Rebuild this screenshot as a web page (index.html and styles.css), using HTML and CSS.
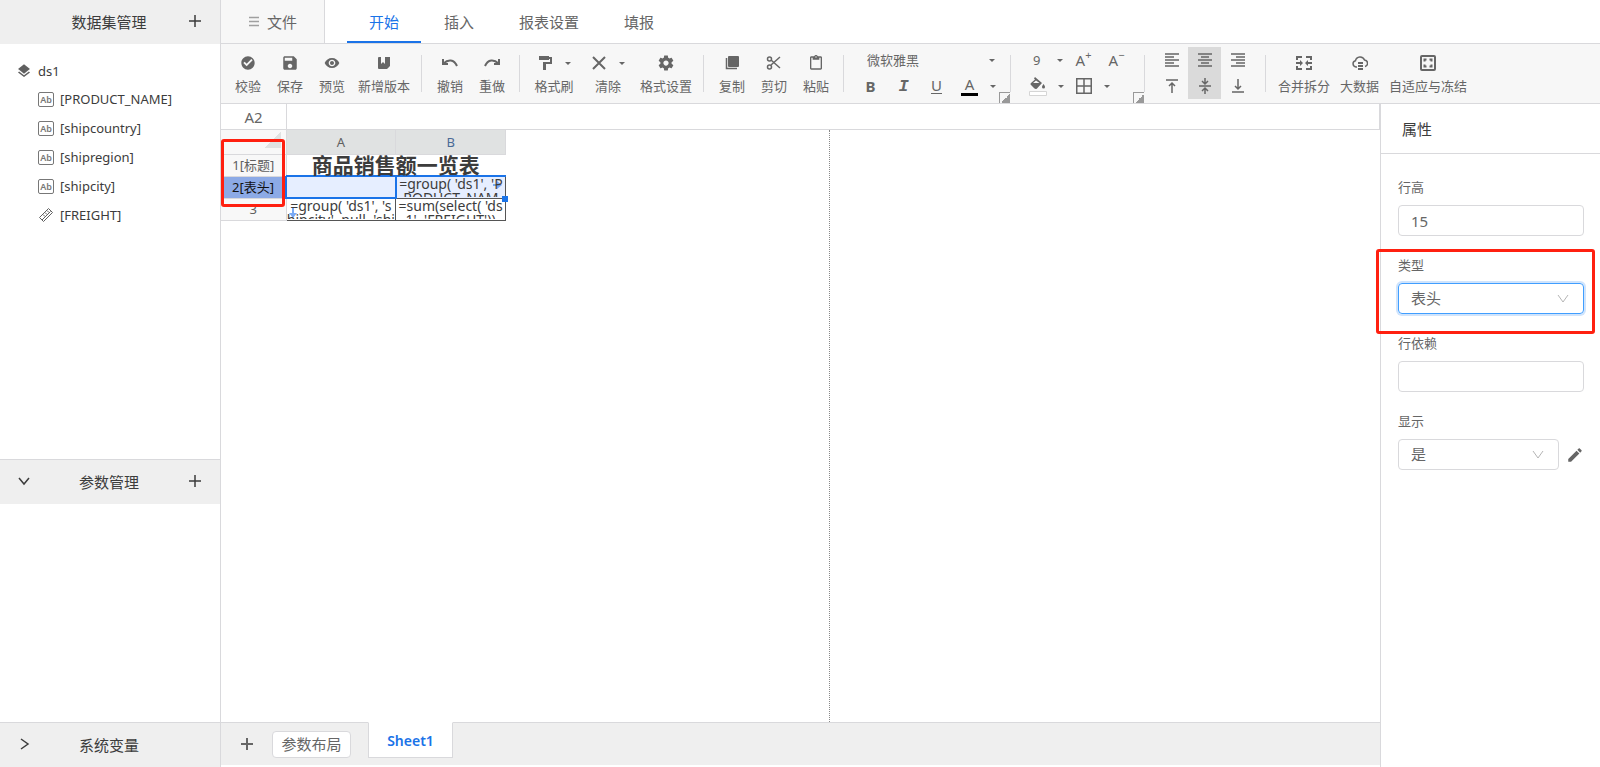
FILE: index.html
```html
<!DOCTYPE html>
<html lang="zh-CN">
<head>
  <meta charset="UTF-8" />
  <meta name="viewport" content="width=device-width, initial-scale=1" />
  <title>报表设计器</title>
  <link rel="stylesheet" href="styles.css">
</head>
<body>
  <aside class="sidebar">
    <div class="side-head">
      <span></span>
      <h2>数据集管理</h2>
      <button class="icon-btn" title="新增数据集"><svg width="12" height="12" viewBox="0 0 12 12"><path class="line2" d="M6 0v12M0 6h12"/></svg></button>
    </div>
    <div class="tree">
      <div class="tree-root"><svg class="fill" width="16" height="16" viewBox="0 0 24 24"><path d="M11.99 18.54l-7.37-5.73L3 14.07l9 7 9-7-1.63-1.27-7.38 5.74zM12 16l7.36-5.73L21 9l-9-7-9 7 1.63 1.27L12 16z"/></svg>ds1</div>
      <ul>
        <li><span class="ab">Ab</span>[PRODUCT_NAME]</li>
        <li><span class="ab">Ab</span>[shipcountry]</li>
        <li><span class="ab">Ab</span>[shipregion]</li>
        <li><span class="ab">Ab</span>[shipcity]</li>
        <li><svg width="16" height="16" viewBox="0 0 16 16"><path class="thin" d="M10.500 1.500L14.500 5.500 5.500 14.500 1.500 10.500zM4 13l8.500-8.500M5 7.500l2 2M7 5.500l2 2M9 3.500l2 2"/></svg>[FREIGHT]</li>
      </ul>
    </div>
    <div class="side-head ruled">
      <button class="icon-btn" title="收起"><svg width="12" height="12" viewBox="0 0 12 12"><path class="line" d="M1 3l5 6 5-6"/></svg></button>
      <h2>参数管理</h2>
      <button class="icon-btn" title="新增参数"><svg width="12" height="12" viewBox="0 0 12 12"><path class="line2" d="M6 0v12M0 6h12"/></svg></button>
    </div>
    <div class="params"></div>
    <div class="side-head ruled">
      <button class="icon-btn" title="展开"><svg width="12" height="12" viewBox="0 0 12 12"><path class="line" d="M3 1l7 5-7 5"/></svg></button>
      <h2>系统变量</h2>
      <span></span>
    </div>
  </aside>

  <main class="designer">
    <nav class="menu">
      <button class="file"><svg width="10" height="11" viewBox="0 0 10 11"><path class="line" d="M0 1.500h10M0 5.500h10M0 9.500h10"/></svg>文件</button>
      <div class="tabs">
        <button class="tab active">开始</button>
        <button class="tab">插入</button>
        <button class="tab">报表设置</button>
        <button class="tab">填报</button>
      </div>
    </nav>

    <div class="toolbar">
      <div class="group">
        <button class="tool"><svg class="fill" width="16" height="16" viewBox="0 0 24 24"><path d="M12 2C6.480 2 2 6.480 2 12s4.480 10 10 10 10-4.480 10-10S17.520 2 12 2zm-2 15l-5-5 2-2 3 3 7-7 2 2-9 9z"/></svg>校验</button>
        <button class="tool"><svg class="fill" width="18" height="18" viewBox="0 0 24 24"><path d="M17 3H5c-1.110 0-2 .9-2 2v14c0 1.100.89 2 2 2h14c1.100 0 2-.9 2-2V7l-4-4zm-5 16c-1.660 0-3-1.340-3-3s1.340-3 3-3 3 1.340 3 3-1.340 3-3 3zm3-10H5V5h10v4z"/></svg>保存</button>
        <button class="tool"><svg class="fill" width="16" height="16" viewBox="0 0 24 24"><path d="M12 4.500C7 4.500 2.730 7.610 1 12c1.730 4.390 6 7.500 11 7.500s9.270-3.110 11-7.500c-1.730-4.390-6-7.500-11-7.500zM12 17c-2.760 0-5-2.240-5-5s2.240-5 5-5 5 2.240 5 5-2.240 5-5 5zm0-8c-1.660 0-3 1.340-3 3s1.340 3 3 3 3-1.340 3-3-1.340-3-3-3z"/></svg>预览</button>
        <button class="tool"><svg class="fill" width="16" height="16" viewBox="0 0 16 16"><path d="M3 2h2v7l2-2 2 2V2h5v9l-3 3H3a1 1 0 0 1-1-1V3a1 1 0 0 1 1-1z"/></svg>新增版本</button>
      </div>
      <span class="sep"></span>
      <div class="group">
        <button class="tool"><svg width="16" height="16" viewBox="0 0 16 16"><path class="line2" d="M1 4v5h5M1.500 8.500C6 4 12 4 15 11"/></svg>撤销</button>
        <button class="tool"><svg width="16" height="16" viewBox="0 0 16 16"><path class="line2" d="M15 4v5h-5M14.500 8.500C10 4 4 4 1 11"/></svg>重做</button>
      </div>
      <span class="sep"></span>
      <div class="group">
        <button class="tool drop"><span class="pair"><svg class="fill" width="16" height="16" viewBox="0 0 16 16"><path d="M2 1h10v1h3v7H9v6H6V7h7V4h-1v1H2z"/></svg><i class="caret"></i></span>格式刷</button>
        <button class="tool drop"><span class="pair"><svg width="16" height="16" viewBox="0 0 16 16"><path class="line2" d="M2 2l12 12M14 2L2 14"/></svg><i class="caret"></i></span>清除</button>
        <button class="tool"><svg class="fill" width="18" height="18" viewBox="0 0 24 24"><path d="M19.430 12.980c.04-.32.07-.64.07-.98s-.03-.66-.07-.98l2.110-1.650c.19-.15.24-.42.12-.64l-2-3.460c-.12-.22-.39-.3-.61-.22l-2.490 1c-.52-.4-1.080-.73-1.690-.98l-.38-2.650C14.460 2.180 14.250 2 14 2h-4c-.25 0-.46.18-.49.42l-.38 2.650c-.61.25-1.170.59-1.690.98l-2.490-1c-.23-.09-.49 0-.61.22l-2 3.460c-.13.22-.07.49.12.64l2.110 1.650c-.04.32-.07.65-.07.98s.03.66.07.98l-2.110 1.650c-.19.15-.24.42-.12.64l2 3.460c.12.22.39.3.61.22l2.490-1c.52.4 1.080.73 1.690.98l.38 2.650c.03.24.24.42.49.42h4c.25 0 .46-.18.49-.42l.38-2.650c.61-.25 1.170-.59 1.690-.98l2.490 1c.23.09.49 0 .61-.22l2-3.460c.12-.22.07-.49-.12-.64l-2.110-1.650zM12 15.500c-1.930 0-3.500-1.570-3.500-3.500s1.570-3.500 3.500-3.500 3.500 1.570 3.500 3.500-1.570 3.500-3.500 3.500z"/></svg>格式设置</button>
      </div>
      <span class="sep"></span>
      <div class="group">
        <button class="tool"><svg width="16" height="16" viewBox="0 0 16 16"><rect x="4" y="1" width="11" height="11" rx="1" fill="currentColor"/><path class="line" d="M2.500 3v10.500H13"/></svg>复制</button>
        <button class="tool"><svg width="16" height="16" viewBox="0 0 16 16"><path class="line" d="M14 2L5 10M5 5l9 8"/><circle class="line" cx="3.500" cy="4" r="2"/><circle class="line" cx="3.500" cy="12" r="2"/></svg>剪切</button>
        <button class="tool"><svg class="fill" width="16" height="16" viewBox="0 0 24 24"><path d="M19 2h-4.180C14.400.84 13.300 0 12 0c-1.300 0-2.400.84-2.820 2H5c-1.100 0-2 .9-2 2v16c0 1.100.9 2 2 2h14c1.100 0 2-.9 2-2V4c0-1.100-.9-2-2-2zm-7 0c.55 0 1 .45 1 1s-.45 1-1 1-1-.45-1-1 .45-1 1-1zm7 18H5V4h2v3h10V4h2v16z"/></svg>粘贴</button>
      </div>
      <span class="sep"></span>
      <div class="group format">
        <div class="format-row">
          <select class="font-select" aria-label="字体"><option>微软雅黑</option></select>
          <i class="caret"></i>
        </div>
        <div class="format-row">
          <button class="cell bold">B</button>
          <button class="cell italic">I</button>
          <button class="cell"><span class="under">U</span></button>
          <button class="cell"><span class="swatch">A</span></button>
          <button class="arrow" aria-label="字体颜色"><i class="caret"></i></button>
        </div>
        <button class="launcher" aria-label="字体设置"></button>
      </div>
      <span class="sep"></span>
      <div class="group format">
        <div class="format-row">
          <select class="size-select" aria-label="字号"><option>9</option></select>
          <i class="caret"></i>
          <button class="cell">A<sup>+</sup></button>
          <button class="cell">A<sup>−</sup></button>
        </div>
        <div class="format-row">
          <button class="cell" aria-label="填充"><svg width="18" height="20" viewBox="0 0 18 20"><path fill="currentColor" fill-rule="evenodd" d="M6 1l7 6-5 5.500c-1 .8-2 .5-2.500 0L2 9c-.7-.8-.6-1.500 0-2l4-3.500-1-1zM7 4.500L4 7h6.500zM14.500 8c1 1.500 1.500 2.200 1.500 3a1.500 1.500 0 0 1-3 0c0-.8.5-1.500 1.500-3z"/><path fill="#fff" stroke="#d5d5d5" d="M.5 15.500h17v4H.5z"/></svg></button>
          <button class="arrow" aria-label="填充颜色"><i class="caret"></i></button>
          <button class="cell" aria-label="边框"><svg width="16" height="16" viewBox="0 0 16 16"><path class="line" d="M.75.75h14.500v14.500H.75zM8 1v14M1 8h14"/></svg></button>
          <button class="arrow" aria-label="边框样式"><i class="caret"></i></button>
        </div>
        <button class="launcher" aria-label="单元格设置"></button>
      </div>
      <span class="sep"></span>
      <div class="group format">
        <div class="format-row">
          <button class="cell" aria-label="左对齐"><svg width="14" height="14" viewBox="0 0 14 14"><path class="bar" d="M0 1h14M0 4h9M0 7h14M0 10h9M0 13h14"/></svg></button>
          <button class="cell on" aria-label="居中"><svg width="14" height="14" viewBox="0 0 14 14"><path class="bar" d="M0 1h14M3 4h8M0 7h14M3 10h8M0 13h14"/></svg></button>
          <button class="cell" aria-label="右对齐"><svg width="14" height="14" viewBox="0 0 14 14"><path class="bar" d="M0 1h14M5 4h9M0 7h14M5 10h9M0 13h14"/></svg></button>
        </div>
        <div class="format-row">
          <button class="cell" aria-label="顶端对齐"><svg width="12" height="14" viewBox="0 0 12 14"><path class="line" d="M0 1h12M6 14V5M3 7l3-3 3 3"/></svg></button>
          <button class="cell on" aria-label="垂直居中"><svg width="12" height="16" viewBox="0 0 12 16"><path class="line" d="M0 8h12M6 0v5M3 3l3 3 3-3M6 16v-5M3 13l3-3 3 3"/></svg></button>
          <button class="cell" aria-label="底端对齐"><svg width="12" height="14" viewBox="0 0 12 14"><path class="line" d="M0 13h12M6 0v9M3 7l3 3 3-3"/></svg></button>
        </div>
      </div>
      <span class="sep"></span>
      <div class="group">
        <button class="tool"><svg width="16" height="16" viewBox="0 0 16 16"><path class="line2" d="M6 2H1v3M10 2h5v3M6 14H1v-3M10 14h5v-3M0 8h6M16 8h-6"/><path fill="currentColor" d="M4 5l3 3-3 3zM12 5L9 8l3 3z"/></svg>合并拆分</button>
        <button class="tool"><svg width="16" height="16" viewBox="0 0 16 16"><path class="line" d="M5 12H4a3.200 3.200 0 0 1-.5-6.300 4.700 4.700 0 0 1 9-.7 3.300 3.300 0 0 1 .5 6.500"/><path class="line2" d="M6 8h5M6 11h5M6 14h5"/></svg>大数据</button>
        <button class="tool"><svg width="16" height="16" viewBox="0 0 16 16"><rect class="line2" x="1" y="1" width="14" height="14" rx="1"/><path class="line2" d="M4.500 6.500v-2h2M9.500 4.500h2v2M11.500 9.500v2h-2M6.500 11.500h-2v-2"/></svg>自适应与冻结</button>
      </div>
    </div>

    <div class="work">
      <section class="editor">
        <div class="formula">
          <span class="cell-name">A2</span>
          <input type="text" aria-label="公式">
        </div>
        <div class="canvas">
          <table class="sheet">
            <thead>
              <tr><th class="corner"></th><th>A</th><th class="current">B</th></tr>
            </thead>
            <tbody>
              <tr><th>1[标题]</th><td class="title" colspan="2">商品销售额一览表</td></tr>
              <tr class="selected"><th>2[表头]</th><td></td><td><svg class="mark right" width="9" height="8" viewBox="0 0 9 8"><path d="M0 3h4V0l5 4-5 4V5H0z"/></svg><div class="value">=group( 'ds1', 'PRODUCT_NAME')</div><i class="handle"></i></td></tr>
              <tr class="detail"><th>3</th><td><svg class="mark down" width="8" height="10" viewBox="0 0 8 10"><path d="M3 0v5H0l4 5 4-5H5V0z"/></svg><div class="value">=group( 'ds1', 'shipcity', null, 'shi</div></td><td><div class="value">=sum(select( 'ds1', 'FREIGHT'))</div></td></tr>
            </tbody>
          </table>
          <div class="page-edge"></div>
          <div class="callout rows"></div>
        </div>
        <footer class="sheets">
          <button class="icon-btn" title="新增"><svg width="12" height="12" viewBox="0 0 12 12"><path class="line2" d="M6 0v12M0 6h12"/></svg></button>
          <button class="layout">参数布局</button>
          <button class="sheet-tab">Sheet1</button>
        </footer>
      </section>

      <aside class="props">
        <h2>属性</h2>
        <form>
          <div class="field">
            <label for="rowHeight">行高</label>
            <input id="rowHeight" type="text" value="15">
          </div>
          <div class="field">
            <label for="rowType">类型</label>
            <div class="select focus">
              <select id="rowType"><option>表头</option></select>
              <svg width="12" height="10" viewBox="0 0 12 10"><path class="line" d="M1 1l5 7 5-7"/></svg>
            </div>
            <div class="callout type"></div>
          </div>
          <div class="field">
            <label for="rowDep">行依赖</label>
            <input id="rowDep" type="text">
          </div>
          <div class="field">
            <label for="visible">显示</label>
            <div class="with-edit">
              <div class="select">
                <select id="visible"><option>是</option></select>
                <svg width="12" height="10" viewBox="0 0 12 10"><path class="line" d="M1 1l5 7 5-7"/></svg>
              </div>
              <button type="button" class="icon-btn edit" title="编辑"><svg class="fill" width="18" height="18" viewBox="0 0 24 24"><path d="M3 17.250V21h3.750L17.810 9.940l-3.750-3.750L3 17.250zM20.710 7.040c.39-.39.39-1.020 0-1.410l-2.340-2.340c-.39-.39-1.020-.39-1.410 0l-1.830 1.830 3.750 3.750 1.830-1.830z"/></svg></button>
            </div>
          </div>
        </form>
      </aside>
    </div>
  </main>
</body>
</html>
```

FILE: styles.css
```css
:root {
  --line: #d9d9dc;
  --bar: #efefef;
  --tool-bg: #f7f7f7;
  --text: #3c3c3c;
  --muted: #666666;
  --accent: #1a73e8;
  --mark: #ff2010;
}
* {
  box-sizing: border-box;
}
body {
  margin: 0;
  height: 100vh;
  display: flex;
  font-family: "Noto Sans", "Noto Sans CJK SC", sans-serif;
  font-size: 13px;
  color: var(--text);
  background: #fff;
  overflow: hidden;
}
button, input, select {
  font: inherit;
  color: inherit;
  background: none;
  border: none;
  margin: 0;
  padding: 0;
}
button {
  cursor: pointer;
}
select {
  appearance: none;
}
h2 {
  margin: 0;
  font-size: 15px;
  font-weight: 400;
}
svg {
  display: block;
  flex: none;
}
.fill {
  fill: currentColor;
}
.line, .line2, .bar, .thin {
  fill: none;
  stroke: currentColor;
  stroke-width: 1.5;
}
.line2 {
  stroke-width: 2;
}
.thin {
  stroke-width: 1;
}
.icon-btn {
  display: flex;
  align-items: center;
  justify-content: center;
}

/* left side */
.sidebar {
  flex: none;
  width: 221px;
  display: flex;
  flex-direction: column;
  border-right: 1px solid var(--line);
}
.side-head {
  flex: none;
  height: 44px;
  display: grid;
  grid-template-columns: 48px 1fr 50px;
  align-items: center;
  text-align: center;
  background: var(--bar);
  padding-bottom: 2px;
}
.side-head.ruled {
  height: 45px;
  border-top: 1px solid var(--line);
}
.side-head .line2 {
  stroke-width: 1.5;
}
.tree {
  flex: 403;
  padding-top: 12px;
}
.tree-root, .tree li {
  display: flex;
  align-items: center;
  height: 29px;
}
.tree-root {
  gap: 6px;
  padding-left: 16px;
}
.tree ul {
  list-style: none;
  margin: 0;
  padding: 0 0 0 38px;
}
.tree li {
  gap: 6px;
  padding-bottom: 1px;
}
.tree svg {
  color: #606060;
}
.ab {
  width: 16px;
  height: 15px;
  border: 1px solid #777;
  border-radius: 2px;
  font-size: 9px;
  font-weight: 600;
  line-height: 13px;
  text-align: center;
  color: #777;
}
.params {
  flex: 218;
}

/* menu */
.designer {
  flex: 1;
  min-width: 0;
  display: flex;
  flex-direction: column;
}
.menu {
  flex: none;
  height: 44px;
  display: flex;
  border-bottom: 1px solid var(--line);
  font-size: 15px;
  color: var(--muted);
}
.file {
  width: 104px;
  display: flex;
  align-items: center;
  justify-content: center;
  gap: 8px;
  padding-left: 1px;
  background: var(--tool-bg);
  border-right: 1px solid var(--line);
}
.file svg {
  color: #a0a0a0;
}
.tabs {
  display: flex;
  padding-left: 22px;
}
.tab {
  padding: 2px 22px 0;
  margin-right: 1px;
  border-bottom: 2px solid transparent;
}
.tab.active {
  color: var(--accent);
  border-bottom-color: var(--accent);
}

/* toolbar */
.toolbar {
  flex: none;
  height: 60px;
  display: flex;
  align-items: center;
  background: var(--tool-bg);
  border-bottom: 1px solid var(--line);
  color: var(--muted);
  white-space: nowrap;
}
.group {
  height: 100%;
  display: flex;
  padding: 0 6px;
}
.group + .sep + .group {
  padding-left: 7px;
}
.sep {
  flex: none;
  width: 1px;
  height: 37px;
  background: var(--line);
}
.tool {
  min-width: 42px;
  padding: 10px 5px 0;
  display: flex;
  flex-direction: column;
  align-items: center;
  gap: 5px;
  line-height: 18px;
}
.tool > svg, .pair {
  height: 18px;
}
.tool.drop {
  min-width: 54px;
}
.pair {
  display: flex;
  align-items: center;
  gap: 12px;
}
.caret {
  flex: none;
  border: 3px solid transparent;
  border-top-color: currentColor;
  border-bottom: none;
}
.group.format, .group + .sep + .group.format {
  position: relative;
  flex-direction: column;
  padding: 3px 11px 0 10px;
}
.format-row {
  height: 26px;
  display: flex;
  align-items: center;
}
.cell {
  width: 33px;
  height: 26px;
  display: flex;
  align-items: center;
  justify-content: center;
  font-size: 15px;
}
.cell.on {
  background: #dadada;
}
.cell sup {
  font-size: 11px;
  line-height: 16px;
  align-self: flex-start;
}
.bold {
  font-weight: 700;
}
.italic {
  font-family: "Liberation Mono", monospace;
  font-style: italic;
  font-weight: 700;
  font-size: 17px;
}
.under {
  width: 11px;
  line-height: 15px;
  border-bottom: 1px solid currentColor;
}
.swatch {
  width: 17px;
  line-height: 17px;
  border-bottom: 3px solid #000;
}
.arrow {
  width: 13px;
  height: 26px;
  display: flex;
  align-items: center;
  justify-content: center;
}
.font-select {
  width: 135px;
  padding-left: 13px;
}
.size-select {
  width: 36px;
  padding-left: 12px;
}
.size-select + .caret {
  margin-right: 4px;
}
.launcher {
  position: absolute;
  right: 0;
  bottom: 0;
  width: 11px;
  height: 11px;
  border: solid #999;
  border-width: 1px 0 0 1px;
  background: linear-gradient(135deg, transparent 55%, #999 55%);
}

/* sheet */
.work {
  flex: 1;
  min-height: 0;
  display: flex;
}
.editor {
  flex: 1;
  min-width: 0;
  display: flex;
  flex-direction: column;
}
.formula {
  flex: none;
  height: 26px;
  display: flex;
  border-bottom: 1px solid var(--line);
  border-right: 1px solid var(--line);
}
.cell-name {
  width: 66px;
  border-right: 1px solid var(--line);
  font-size: 15px;
  line-height: 27px;
  text-align: center;
  color: var(--muted);
}
.formula input {
  flex: 1;
}
.canvas {
  flex: 1;
  position: relative;
}
.sheet {
  width: 285px;
  table-layout: fixed;
  border-collapse: collapse;
}
.sheet th, .sheet td {
  position: relative;
  height: 22px;
  padding: 0;
  border: 1px solid var(--line);
}
.sheet th {
  font-weight: 400;
  line-height: 20px;
  color: #606060;
  background: #f8f8f8;
}
.sheet tr > :first-child {
  width: 65px;
  border-left: none;
}
.sheet thead th {
  height: 24px;
  background: #e0e2e2;
  border-top: none;
}
.sheet thead .current {
  color: #4a6a96;
}
.sheet thead .corner {
  background: linear-gradient(135deg, transparent 50%, #e0e2e2 50%) 44px 2px / 16px 16px no-repeat #f8f8f8;
}
.sheet td.title {
  font-size: 21px;
  font-weight: 700;
  line-height: 20px;
  text-align: center;
  border-color: #fff;
}
.sheet .selected th {
  color: #111;
  background: #8caae6;
}
.sheet .selected td {
  background: #e6eeff;
  border: 2px solid var(--accent);
}
.sheet .selected td + td {
  border: 1px solid #555;
  border-top: 2px solid var(--accent);
}
.sheet .detail td {
  border-right-color: #555;
  border-bottom-color: #555;
}
.value {
  position: relative;
  height: 20px;
  font-size: 14px;
  line-height: 14px;
  text-align: center;
  word-break: break-all;
  overflow: hidden;
}
.mark {
  position: absolute;
  fill: #7aaaf5;
}
.mark.right {
  right: 3px;
  top: 4px;
}
.mark.down {
  left: 2px;
  bottom: 2px;
}
.handle {
  position: absolute;
  right: -3px;
  bottom: -4px;
  width: 6px;
  height: 6px;
  background: var(--accent);
  z-index: 1;
}
.page-edge {
  position: absolute;
  left: 608px;
  top: 0;
  bottom: 0;
  border-left: 1px dotted #888;
}
.callout {
  position: absolute;
  border: 3px solid var(--mark);
  border-radius: 3px;
  pointer-events: none;
}
.callout.rows {
  left: 0;
  top: 9px;
  width: 64px;
  height: 68px;
}
.sheets {
  flex: none;
  height: 43px;
  margin-bottom: 2px;
  display: flex;
  align-items: center;
  background: var(--bar);
  border-top: 1px solid var(--line);
  font-size: 15px;
  color: var(--muted);
}
.sheets .icon-btn {
  width: 51px;
}
.layout {
  width: 79px;
  height: 27px;
  line-height: 25px;
  border: 1px solid var(--line);
  border-radius: 4px;
  background: #fff;
}
.sheet-tab {
  align-self: flex-start;
  height: 36px;
  width: 85px;
  margin-left: 17px;
  margin-top: -1px;
  border: 1px solid var(--line);
  border-top-color: #fff;
  background: #fff;
  color: var(--accent);
  font-size: 14px;
  font-weight: 600;
}

/* properties */
.props {
  flex: none;
  width: 220px;
  border-left: 1px solid var(--line);
}
.props h2 {
  height: 50px;
  padding-left: 21px;
  line-height: 51px;
  border-bottom: 1px solid var(--line);
}
.props form {
  padding: 23px 16px 0 17px;
  color: var(--muted);
}
.field {
  position: relative;
  height: 78px;
}
.field label {
  display: block;
  height: 28px;
  line-height: 20px;
}
.field input, .select {
  width: 100%;
  height: 31px;
  border: 1px solid var(--line);
  border-radius: 4px;
  font-size: 15px;
}
.field input {
  padding-left: 12px;
}
.select {
  position: relative;
}
.select select {
  width: 100%;
  height: 100%;
  padding: 0 0 2px 12px;
}
.select svg {
  position: absolute;
  right: 14px;
  top: 10px;
  color: #b5b5b5;
  pointer-events: none;
}
.select .line {
  stroke-width: 1;
}
.select.focus {
  border-color: #409eff;
  box-shadow: 0 0 0 2px #d0e4fc;
}
.with-edit {
  display: flex;
}
.edit {
  flex: none;
  width: 25px;
  padding-left: 7px;
}
.callout.type {
  left: -22px;
  right: -11px;
  top: -6px;
  height: 85px;
}
```
